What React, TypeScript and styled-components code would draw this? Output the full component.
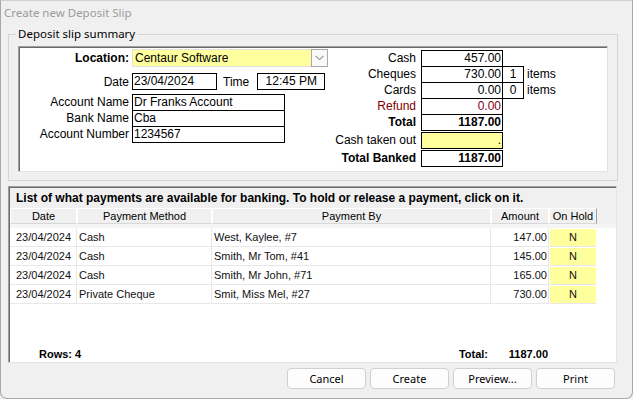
import React from "react";
import styled, { createGlobalStyle } from "styled-components";

const GlobalStyle = createGlobalStyle`
  html, body { margin: 0; padding: 0; background: #f0f0f0; }
  body { font-family: "Liberation Sans", Arial, sans-serif; font-size: 12px; color: #000; }
  * { box-sizing: border-box; }
`;

const YELLOW = "#ffff9e";

const Window = styled.div`
  width: 633px;
  height: 399px;
  border: 1px solid #a8a8a8;
  border-top-color: #d0d0d0;
  border-radius: 0 0 7px 7px;
  background: #f0f0f0;
  display: flex;
  flex-direction: column;
  overflow: hidden;
`;

const TitleBar = styled.div`
  height: 23px;
  padding-left: 3px;
  display: flex;
  align-items: center;
  font-family: "Noto Sans", "Open Sans", sans-serif;
  font-size: 11.5px;
  color: #9b9b9b;
`;

const Group = styled.fieldset`
  margin: 3px 14px 0 7px;
  padding: 5px 9px 8px 9px;
  border: 1px solid #d5d5d5;
  min-width: 0;
`;

const Legend = styled.legend`
  margin-left: -2px;
  padding: 0 2px;
  font-family: "Noto Sans", "Open Sans", sans-serif;
  font-size: 11.5px;
  line-height: 14px;
`;

const Sunken = styled.div`
  background: #fff;
  border-top: 1px solid #a0a0a0;
  border-left: 1px solid #a0a0a0;
  border-right: 1px solid #e3e3e3;
  border-bottom: 1px solid #e3e3e3;
  box-shadow: inset 1px 1px 0 #696969;
`;

const SummaryPanel = styled(Sunken)`
  height: 126px;
  display: grid;
  grid-template-columns: 298px 1fr;
`;

const LeftCol = styled.div`
  padding-top: 2px;
  display: flex;
  flex-direction: column;
  min-width: 0;
`;

const RightCol = styled.div`
  padding-top: 3px;
  display: flex;
  flex-direction: column;
`;

const FieldRow = styled.div<{ $h: number; $mt?: number }>`
  display: flex;
  align-items: center;
  height: ${(p) => p.$h}px;
  margin-top: ${(p) => p.$mt ?? 0}px;
  & > * { flex-shrink: 0; }
`;

const Label = styled.div<{ $w: number; $bold?: boolean; $color?: string; $gap?: number }>`
  width: ${(p) => p.$w}px;
  margin-right: ${(p) => p.$gap ?? 3}px;
  text-align: right;
  white-space: nowrap;
  font-weight: ${(p) => (p.$bold ? 700 : 400)};
  color: ${(p) => p.$color ?? "#000"};
`;

const InlineLabel = styled.div<{ $ml: number; $mr: number }>`
  margin-left: ${(p) => p.$ml}px;
  margin-right: ${(p) => p.$mr}px;
  white-space: nowrap;
`;

const Select = styled.div`
  width: 196px;
  height: 18px;
  display: flex;
  border: 1px solid #e3e3e3;
  background: ${YELLOW};
`;

const SelectText = styled.div`
  flex: 1;
  padding-left: 2px;
  line-height: 16px;
`;

const SelectButton = styled.div`
  width: 17px;
  height: 18px;
  margin: -1px -1px 0 0;
  border: 1px solid #a9a9a9;
  background: #f9f9f9;
  display: flex;
  align-items: center;
  justify-content: center;
`;

const Box = styled.div<{ $w: number; $align?: string; $bg?: string; $bold?: boolean; $color?: string; $ml?: number }>`
  width: ${(p) => p.$w}px;
  height: 17px;
  align-self: flex-start;
  margin-left: ${(p) => p.$ml ?? 0}px;
  border: 1px solid #000;
  background: ${(p) => p.$bg ?? "#fff"};
  text-align: ${(p) => p.$align ?? "left"};
  padding: 0 1px;
  line-height: 15px;
  white-space: nowrap;
  overflow: hidden;
  font-weight: ${(p) => (p.$bold ? 700 : 400)};
  color: ${(p) => p.$color ?? "#000"};
`;

const Items = styled.div`
  margin-left: 3px;
`;

const ListPanel = styled(Sunken)`
  margin: 5px 15px 0 7px;
  height: 177px;
  padding: 1px 0 0 1px;
  display: flex;
  flex-direction: column;
`;

const Caption = styled.div`
  background: #f0f0f0;
  height: 20px;
  line-height: 20px;
  padding-left: 6px;
  font-weight: 700;
  font-size: 12px;
  white-space: nowrap;
`;

const COLS = "67px 135px 279px 58px 48px";

const HeaderRow = styled.div`
  display: grid;
  grid-template-columns: ${COLS};
  height: 16px;
  background: #f0f0f0;
  font-size: 11px;
`;

const HeaderCell = styled.div<{ $last?: boolean }>`
  border-top: 1px solid #fff;
  border-left: 1px solid #fff;
  border-right: 1px solid ${(p) => (p.$last ? "#a0a0a0" : "#fff")};
  border-bottom: 1px solid #d8d8d8;
  text-align: center;
  line-height: 14px;
  white-space: nowrap;
`;

const HeaderGap = styled.div`
  height: 4px;
  background: #f5f5f5;
`;

const Row = styled.div`
  display: grid;
  grid-template-columns: ${COLS};
  height: 19px;
  font-size: 11px;
  color: #111;
`;

const Cell = styled.div<{ $align?: string; $pl?: number; $pr?: number }>`
  border-right: 1px solid #e8e8e8;
  border-bottom: 1px solid #e8e8e8;
  text-align: ${(p) => p.$align ?? "left"};
  padding-left: ${(p) => p.$pl ?? 2}px;
  padding-right: ${(p) => p.$pr ?? 1}px;
  line-height: 18px;
  white-space: nowrap;
  overflow: hidden;
`;

const HoldCell = styled.div`
  border: 1px solid #fff;
  border-bottom-color: #e8e8e8;
  background: ${YELLOW};
  text-align: center;
  line-height: 17px;
`;

const Footer = styled.div`
  margin-top: auto;
  display: grid;
  grid-template-columns: ${COLS};
  height: 16px;
  line-height: 16px;
  font-size: 11px;
  font-weight: 700;
`;

const FooterRows = styled.div`
  grid-column: 1 / span 2;
  padding-left: 29px;
`;

const FooterTotal = styled.div<{ $pr: number }>`
  text-align: right;
  padding-right: ${(p) => p.$pr}px;
`;

const ButtonBar = styled.div`
  display: flex;
  justify-content: flex-end;
  gap: 4px;
  margin-top: 5px;
  padding-right: 17px;
`;

const Button = styled.button`
  width: 79px;
  height: 21px;
  border: 1px solid #d0d0d0;
  border-radius: 4px;
  background: #fdfdfd;
  font-family: "Noto Sans", "Open Sans", sans-serif;
  font-size: 11px;
  color: #000;
  padding: 0;
`;

const Chevron = () => (
  <svg width="9" height="6" viewBox="0 0 9 6">
    <polyline points="0.5,0.8 4.5,4.8 8.5,0.8" fill="none" stroke="#6a6a6a" strokeWidth="1" />
  </svg>
);

const payments = [
  { date: "23/04/2024", method: "Cash", by: "West, Kaylee, #7", amount: "147.00", hold: "N" },
  { date: "23/04/2024", method: "Cash", by: "Smith, Mr Tom, #41", amount: "145.00", hold: "N" },
  { date: "23/04/2024", method: "Cash", by: "Smith, Mr John, #71", amount: "165.00", hold: "N" },
  { date: "23/04/2024", method: "Private Cheque", by: "Smit, Miss Mel, #27", amount: "730.00", hold: "N" },
];

const RL = 99; // right column label width

export default function App() {
  return (
    <>
      <GlobalStyle />
      <Window>
        <TitleBar>Create new Deposit Slip</TitleBar>
        <Group>
          <Legend>Deposit slip summary</Legend>
          <SummaryPanel>
            <LeftCol>
              <FieldRow $h={18}>
                <Label $w={110} $bold>Location:</Label>
                <Select>
                  <SelectText>Centaur Software</SelectText>
                  <SelectButton>
                    <Chevron />
                  </SelectButton>
                </Select>
              </FieldRow>
              <FieldRow $h={17} $mt={6}>
                <Label $w={110}>Date</Label>
                <Box $w={85}>23/04/2024</Box>
                <InlineLabel $ml={6} $mr={8}>Time</InlineLabel>
                <Box $w={68} $align="center">12:45 PM</Box>
              </FieldRow>
              <FieldRow $h={16} $mt={4}>
                <Label $w={110}>Account Name</Label>
                <Box $w={153}>Dr Franks Account</Box>
              </FieldRow>
              <FieldRow $h={16}>
                <Label $w={110}>Bank Name</Label>
                <Box $w={153}>Cba</Box>
              </FieldRow>
              <FieldRow $h={16}>
                <Label $w={110}>Account Number</Label>
                <Box $w={153}>1234567</Box>
              </FieldRow>
            </LeftCol>
            <RightCol>
              <FieldRow $h={16}>
                <Label $w={RL} $gap={5}>Cash</Label>
                <Box $w={82} $align="right">457.00</Box>
              </FieldRow>
              <FieldRow $h={16}>
                <Label $w={RL} $gap={5}>Cheques</Label>
                <Box $w={82} $align="right">730.00</Box>
                <Box $w={22} $ml={-1} $align="center">1</Box>
                <Items>items</Items>
              </FieldRow>
              <FieldRow $h={16}>
                <Label $w={RL} $gap={5}>Cards</Label>
                <Box $w={82} $align="right">0.00</Box>
                <Box $w={22} $ml={-1} $align="center">0</Box>
                <Items>items</Items>
              </FieldRow>
              <FieldRow $h={16}>
                <Label $w={RL} $gap={5} $color="#800000">Refund</Label>
                <Box $w={82} $align="right" $color="#800020">0.00</Box>
              </FieldRow>
              <FieldRow $h={16}>
                <Label $w={RL} $gap={5} $bold>Total</Label>
                <Box $w={82} $align="right" $bold>1187.00</Box>
              </FieldRow>
              <FieldRow $h={16} $mt={2}>
                <Label $w={RL} $gap={5}>Cash taken out</Label>
                <Box $w={82} $align="right" $bg={YELLOW}>.</Box>
              </FieldRow>
              <FieldRow $h={16} $mt={2}>
                <Label $w={RL} $gap={5} $bold>Total Banked</Label>
                <Box $w={82} $align="right" $bold>1187.00</Box>
              </FieldRow>
            </RightCol>
          </SummaryPanel>
        </Group>

        <ListPanel>
          <Caption>
            List of what payments are available for banking. To hold or release a payment, click on it.
          </Caption>
          <HeaderRow>
            <HeaderCell>Date</HeaderCell>
            <HeaderCell>Payment Method</HeaderCell>
            <HeaderCell>Payment By</HeaderCell>
            <HeaderCell>Amount</HeaderCell>
            <HeaderCell $last>On Hold</HeaderCell>
          </HeaderRow>
          <HeaderGap />
          {payments.map((p, i) => (
            <Row key={i}>
              <Cell $pl={6}>{p.date}</Cell>
              <Cell>{p.method}</Cell>
              <Cell>{p.by}</Cell>
              <Cell $align="right">{p.amount}</Cell>
              <HoldCell>{p.hold}</HoldCell>
            </Row>
          ))}
          <Footer>
            <FooterRows>Rows: 4</FooterRows>
            <FooterTotal $pr={3}>Total:</FooterTotal>
            <FooterTotal $pr={1}>1187.00</FooterTotal>
          </Footer>
        </ListPanel>

        <ButtonBar>
          <Button>Cancel</Button>
          <Button>Create</Button>
          <Button>Preview...</Button>
          <Button>Print</Button>
        </ButtonBar>
      </Window>
    </>
  );
}
